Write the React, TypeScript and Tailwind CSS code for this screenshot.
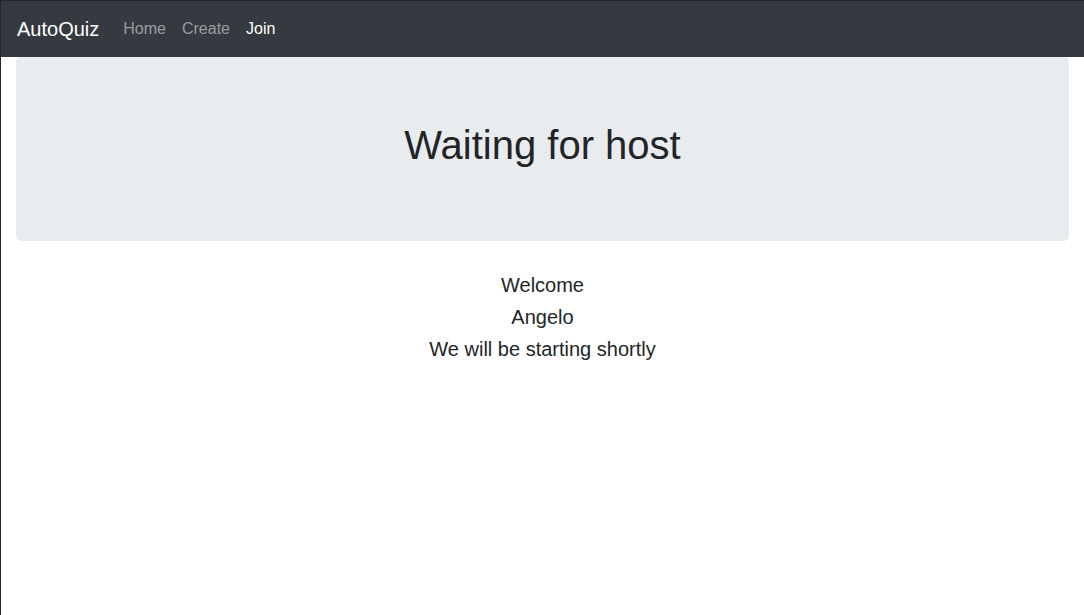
export default function App() {
  return (
    <div
      className="min-h-[615px] border-l border-t border-[#23272b] bg-white text-[#212529]"
      style={{ fontFamily: '"Liberation Sans", Arial, sans-serif' }}
    >
      <nav className="flex h-[56px] items-center bg-[#343a40] px-4">
        <span className="mr-4 text-[20px] leading-[30px] text-white">AutoQuiz</span>
        <div className="flex text-[16px] leading-6">
          <a className="px-2 text-white/50">Home</a>
          <a className="px-2 text-white/50">Create</a>
          <a className="px-2 text-white">Join</a>
        </div>
      </nav>

      <div className="px-[15px]">
        <div className="mb-8 rounded-[5px] bg-[#e9ecef] px-8 py-16 text-center">
          <h1 className="mb-2 text-[40px] leading-[48px]">Waiting for host</h1>
        </div>
        <div className="text-center">
          <h5 className="mb-2 text-[20px] leading-6">Welcome</h5>
          <h5 className="mb-2 text-[20px] leading-6">Angelo</h5>
          <h5 className="mb-2 text-[20px] leading-6">We will be starting shortly</h5>
        </div>
      </div>
    </div>
  );
}
